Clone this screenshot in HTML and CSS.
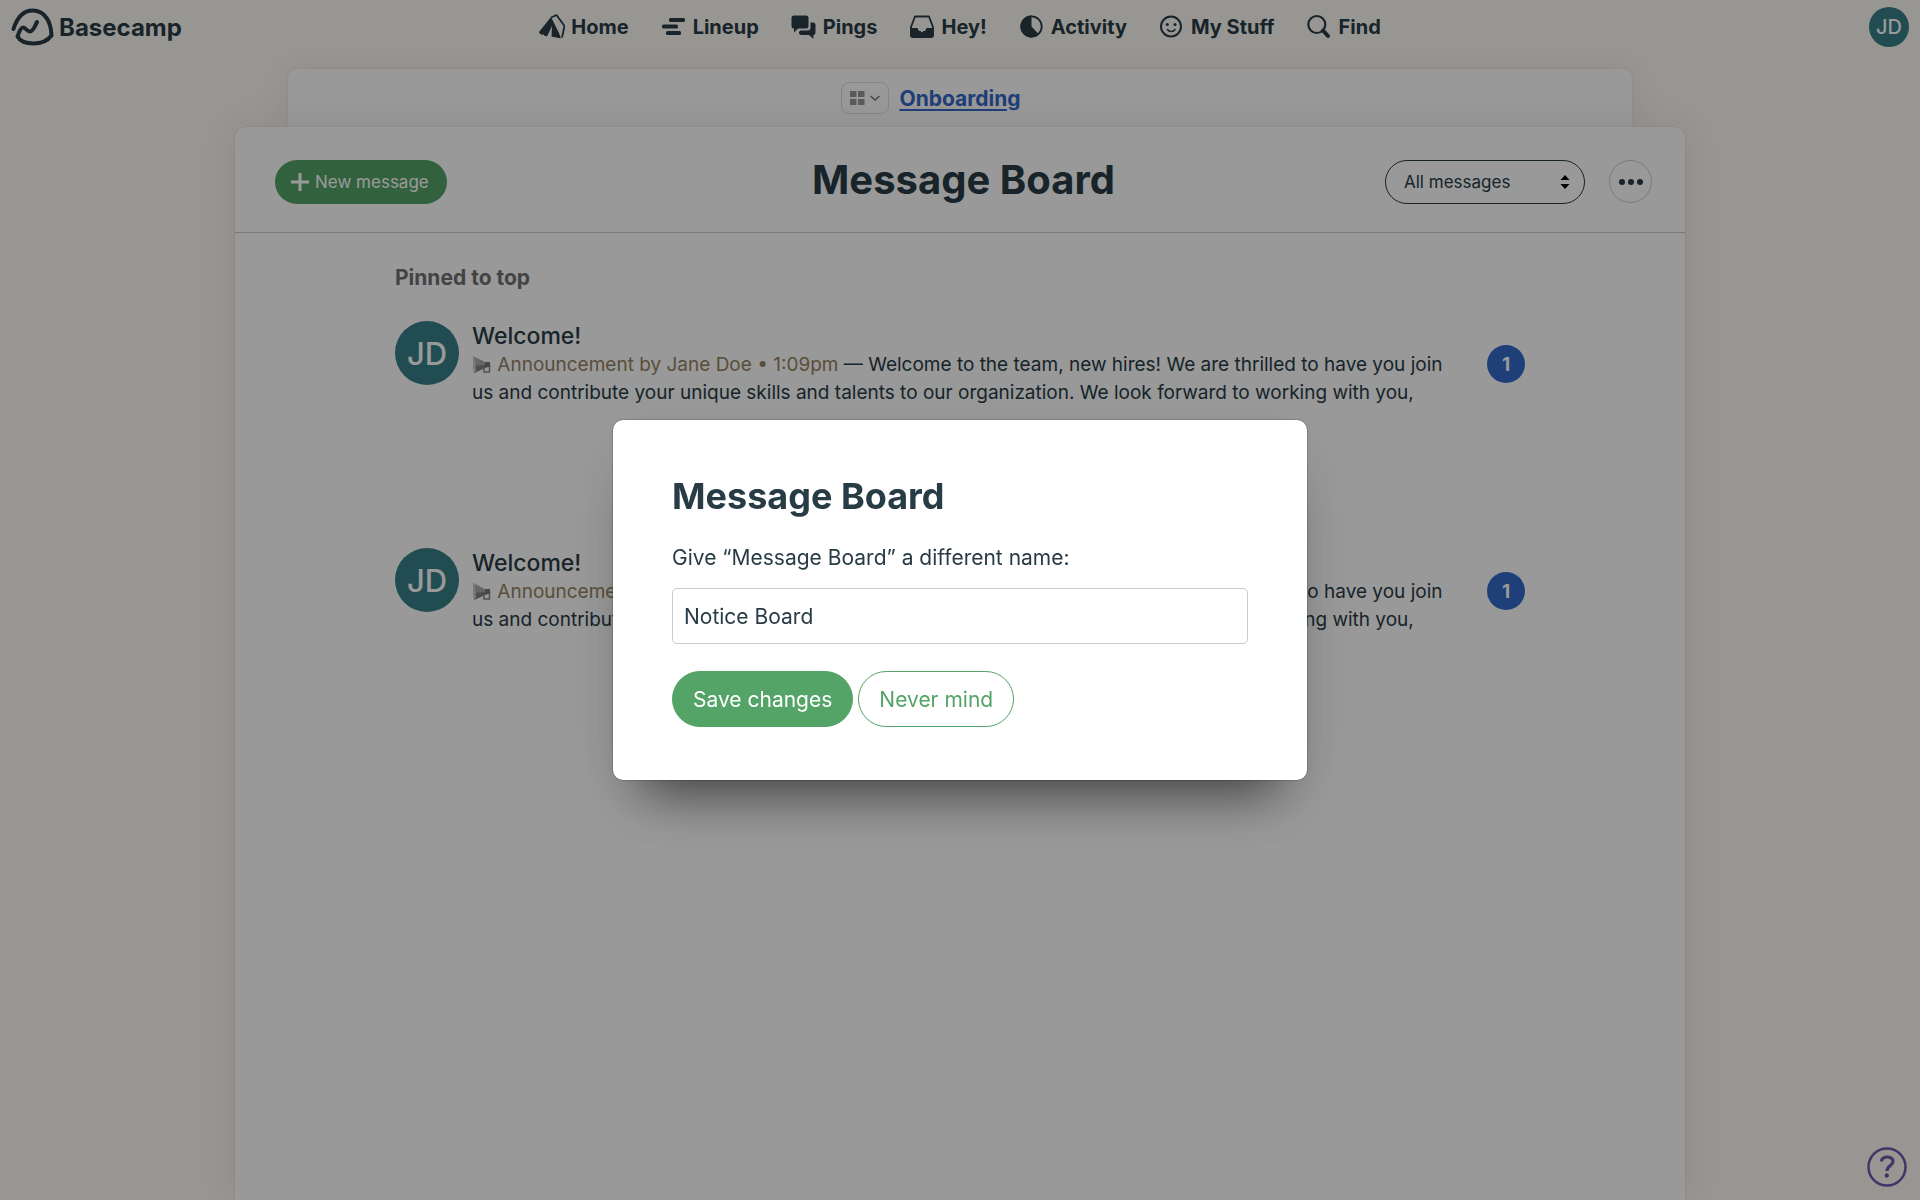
FILE: index.html
```html
<!DOCTYPE html>
<html lang="en">
<head>
  <meta charset="UTF-8">
  <meta name="viewport" content="width=device-width, initial-scale=1.0">
  <title>Message Board</title>
  <link rel="stylesheet" href="styles.css">
</head>
<body>
  <!-- Top navigation -->
  <header class="nav">
    <a class="logo" href="#">
      <svg width="44" height="40" viewBox="0 0 44 40" fill="none" stroke="currentColor" stroke-width="4" stroke-linecap="round" stroke-linejoin="round"><path d="M2.500 22C6 11 12 3.500 21.500 3.500C35 3.500 40 16 40.500 28.500C36 34.500 29 36.500 22.500 36.500C15 36.500 9 34 6.500 29.500C8 25 10 20.500 12 20.500C14.500 20.500 16 24.500 19 24.500C22 24.500 24 19 26 15"/></svg>
      <span>Basecamp</span>
    </a>
    <nav class="nav-links">
      <a href="#">
        <svg class="icon" viewBox="0 0 26 26"><path fill="currentColor" d="M12 3L0 18l1 2 3 1 1-1 0 1.500 3 1L13 12l-.500 10.500 9.500 2L20 19z"/><path fill="none" stroke="currentColor" stroke-width="1.800" stroke-linejoin="round" d="M12 3.500L17.500 1 25.500 12l-2.500 11.500"/></svg>
        Home
      </a>
      <a href="#">
        <svg class="icon" viewBox="0 0 26 26" fill="currentColor"><rect x="8" y="4" width="16" height="4" rx="1.500"/><rect x="1" y="10.500" width="16" height="4" rx="1.500"/><rect x="5" y="17" width="15" height="4" rx="1.500"/></svg>
        Lineup
      </a>
      <a href="#">
        <svg class="icon" viewBox="0 0 26 26" fill="currentColor"><path d="M3 1.500h12a2.500 2.500 0 0 1 2.500 2.500v8a2.500 2.500 0 0 1-2.500 2.500H7L3 18.500v-4A2.500 2.500 0 0 1 .500 12V4A2.500 2.500 0 0 1 3 1.500z"/><path d="M19.500 8.500h2.500a2.500 2.500 0 0 1 2.500 2.500v7.500a2.500 2.500 0 0 1-2 2.500v4l-4.500-4h-7.500a2.500 2.500 0 0 1-2.500-2.500v-.500l1.500-1.500h7a3 3 0 0 0 3-3z"/></svg>
        Pings
      </a>
      <a href="#">
        <svg class="icon" viewBox="0 0 26 26"><path fill="none" stroke="currentColor" stroke-width="1.800" stroke-linejoin="round" d="M6 2.500h14L24 13v8.500a1.500 1.500 0 0 1-1.500 1.500h-19A1.500 1.500 0 0 1 2 21.500V13z"/><path fill="currentColor" d="M1.500 14h7l1.500 3h1.500l1.500 1.500 1.500-1.500h1.500l1.500-3h7v7.500a2 2 0 0 1-2 2h-19a2 2 0 0 1-2-2z"/></svg>
        Hey!
      </a>
      <a href="#">
        <svg class="icon" viewBox="0 0 26 26"><circle cx="12.500" cy="12.500" r="10.200" fill="none" stroke="currentColor" stroke-width="1.800"/><path fill="currentColor" d="M12.500 1.500V12.500L20 20.500A11 11 0 1 1 12.500 1.500z"/></svg>
        Activity
      </a>
      <a href="#">
        <svg class="icon" viewBox="0 0 26 26" fill="none" stroke="currentColor" stroke-width="2"><circle cx="12" cy="12.500" r="10"/><path d="M8.500 15.500c1.500 2.500 6 2.500 7.500 0" stroke-width="1.500" stroke-linecap="round"/><circle cx="8.300" cy="10.500" r="1.500" fill="currentColor" stroke="none"/><circle cx="16" cy="10.500" r="1.500" fill="currentColor" stroke="none"/></svg>
        My Stuff
      </a>
      <a href="#">
        <svg class="icon" viewBox="0 0 26 26" fill="none" stroke="currentColor" stroke-linecap="round"><circle cx="9.800" cy="10.500" r="8.500" stroke-width="2.200"/><path d="M16 16.500L21 22" stroke-width="4"/></svg>
        Find
      </a>
    </nav>
    <a class="avatar avatar-small" href="#">JD</a>
  </header>

  <!-- Project breadcrumb -->
  <div class="crumb">
    <button class="crumb-menu" type="button" aria-label="Tools">
      <svg width="32" height="16" viewBox="0 0 32 16"><path fill="#999" d="M1 1h6.500v6H1zM9 1h6.500v6H9zM1 9h6.500v6H1zM9 9h6.500v6H9z"/><path fill="none" stroke="#777" stroke-width="1.500" d="M21.500 6l4.500 4 4.500-4"/></svg>
    </button>
    <a href="#">Onboarding</a>
  </div>

  <main class="panel">
    <div class="panel-header">
      <div>
        <button class="new-message" type="button">
          <svg width="20" height="20" viewBox="0 0 20 20" stroke="currentColor" stroke-width="3"><path d="M10 1v18M1 10h18"/></svg>
          New message
        </button>
      </div>
      <h1>Message Board</h1>
      <div class="panel-actions">
        <div class="filter">
          <select aria-label="Filter messages">
            <option>All messages</option>
          </select>
          <svg width="10" height="16" viewBox="0 0 10 16"><path d="M5 1l4.500 5H.500zM5 15l4.500-5H.500z"/></svg>
        </div>
        <button class="more" type="button" aria-label="More options">
          <svg width="24" height="8" viewBox="0 0 24 8" fill="currentColor"><circle cx="3" cy="4" r="3"/><circle cx="12" cy="4" r="3"/><circle cx="21" cy="4" r="3"/></svg>
        </button>
      </div>
    </div>

    <div class="messages">
      <h2>Pinned to top</h2>

      <article class="message">
        <span class="avatar">JD</span>
        <div class="message-text">
          <h3>Welcome!</h3>
          <p>
            <svg class="megaphone" viewBox="0 0 20 20"><path fill="none" stroke="#888" stroke-width="1.500" d="M12 13v4h5.500V9"/><path fill="#aaa" d="M1 1L13 7v6L2 18z"/><path fill="#808080" d="M1.500 11L13 10v3L2 18z"/><path fill="#ccc" d="M1 1l2 1.500 1 13L2 18z"/><path fill="#777" d="M13 7h5v4.500l-5 1.500z"/></svg>
            <span class="meta">Announcement by Jane Doe • 1:09pm</span> — Welcome to the team, new hires! We are thrilled to have you join us and contribute your unique skills and talents to our organization. We look forward to working with you,
          </p>
        </div>
        <span class="count">1</span>
      </article>

      <article class="message">
        <span class="avatar">JD</span>
        <div class="message-text">
          <h3>Welcome!</h3>
          <p>
            <svg class="megaphone" viewBox="0 0 20 20"><path fill="none" stroke="#888" stroke-width="1.500" d="M12 13v4h5.500V9"/><path fill="#aaa" d="M1 1L13 7v6L2 18z"/><path fill="#808080" d="M1.500 11L13 10v3L2 18z"/><path fill="#ccc" d="M1 1l2 1.500 1 13L2 18z"/><path fill="#777" d="M13 7h5v4.500l-5 1.500z"/></svg>
            <span class="meta">Announcement by Jane Doe • 1:09pm</span> — Welcome to the team, new hires! We are thrilled to have you join us and contribute your unique skills and talents to our organization. We look forward to working with you,
          </p>
        </div>
        <span class="count">1</span>
      </article>
    </div>
  </main>

  <button class="help" type="button" aria-label="Help">
    <svg width="40" height="40" viewBox="0 0 40 40" fill="none" stroke="currentColor"><circle cx="20" cy="20" r="18.500" stroke-width="2.500"/><path d="M14.500 14.500c0-6 11.500-6 11.500 0 0 4-6 4-6 9.500" stroke-width="3.200"/><circle cx="19.800" cy="28.500" r="2.200" fill="currentColor" stroke="none"/></svg>
  </button>

  <!-- Rename dialog -->
  <div class="overlay">
    <form class="modal" role="dialog" aria-labelledby="modal-title">
      <h2 id="modal-title">Message Board</h2>
      <label for="tool-name">Give “Message Board” a different name:</label>
      <input type="text" id="tool-name" value="Notice Board">
      <div class="modal-buttons">
        <button class="primary" type="submit">Save changes</button>
        <button class="secondary" type="button">Never mind</button>
      </div>
    </form>
  </div>
</body>
</html>
```
FILE: styles.css
```css
* {
  box-sizing: border-box;
}

body {
  display: flex;
  flex-direction: column;
  align-items: center;
  min-height: 100vh;
  margin: 0;
  background-color: #fefaf6;
  color: #283c46;
  font-family: Inter, "Liberation Sans", sans-serif;
  font-size: 19px;
}

h1, h2, h3, p {
  margin: 0;
}

button, input, select {
  font-family: inherit;
  color: inherit;
}

button {
  cursor: pointer;
}

/* Navigation */
.nav {
  display: grid;
  grid-template-columns: 1fr auto 1fr;
  align-items: center;
  width: 100%;
  height: 54px;
  padding: 0 11px;
}

.nav a {
  color: inherit;
  text-decoration: none;
}

.logo {
  display: flex;
  align-items: center;
  gap: 4px;
  font-size: 24px;
  font-weight: 700;
}

.nav-links {
  display: flex;
  gap: 32px;
  font-size: 20px;
  font-weight: 700;
}

.nav-links a {
  display: flex;
  align-items: center;
  gap: 6px;
}

.icon {
  width: 26px;
  height: 26px;
}

.avatar {
  display: flex;
  flex-shrink: 0;
  align-items: center;
  justify-content: center;
  align-self: flex-start;
  width: 64px;
  height: 64px;
  border-radius: 50%;
  background-color: #388089;
  color: #fff;
  font-size: 31px;
  font-weight: 500;
}

.nav .avatar-small {
  align-self: center;
  justify-self: end;
  width: 40px;
  height: 40px;
  color: #fff;
  font-size: 20px;
}

/* Stacked sheets */
.crumb {
  display: flex;
  align-items: center;
  justify-content: center;
  gap: 10px;
  width: 100%;
  max-width: 1344px;
  height: 58px;
  margin-top: 15px;
  padding-right: 58px;
  border-radius: 8px 8px 0 0;
  background-color: #fff;
  box-shadow: 0 0 2px rgba(0, 0, 0, 0.1), 0 0 30px rgba(90, 70, 40, 0.1);
}

.crumb a {
  color: #3469c9;
  font-size: 21px;
  font-weight: 700;
  text-underline-offset: 3px;
}

.crumb-menu {
  display: flex;
  align-items: center;
  justify-content: center;
  width: 48px;
  height: 32px;
  padding: 0;
  border: 1px solid #ddd;
  border-radius: 8px;
  background: none;
}

.panel {
  flex: 1;
  width: 100%;
  max-width: 1450px;
  border-radius: 10px 10px 0 0;
  background-color: #fff;
  box-shadow: 0 0 2px rgba(0, 0, 0, 0.12), 0 0 40px rgba(90, 70, 40, 0.12);
}

.panel-header {
  display: grid;
  grid-template-columns: 1fr auto 1fr;
  align-items: center;
  height: 106px;
  padding: 4px 33px 0 40px;
  border-bottom: 1px solid #ccc;
}

.panel-header h1 {
  margin-bottom: 4px;
  font-size: 40px;
  font-weight: 700;
}

.new-message {
  display: flex;
  align-items: center;
  gap: 5px;
  height: 44px;
  padding: 0 18px 0 15px;
  border: none;
  border-radius: 22px;
  background-color: #54a367;
  color: #fff;
  font-size: 17px;
}

.panel-actions {
  display: flex;
  align-items: center;
  justify-content: flex-end;
  gap: 24px;
}

.filter {
  position: relative;
}

.filter select {
  width: 200px;
  height: 44px;
  padding: 0 18px;
  appearance: none;
  border: 1px solid #283c46;
  border-radius: 22px;
  background: none;
  font-size: 17px;
}

.filter svg {
  position: absolute;
  top: 14px;
  right: 15px;
  pointer-events: none;
}

.more {
  display: flex;
  align-items: center;
  justify-content: center;
  width: 43px;
  height: 43px;
  padding: 0;
  border: 1px solid #ccc;
  border-radius: 50%;
  background: none;
}

/* Messages */
.messages {
  display: flex;
  flex-direction: column;
  gap: 141px;
  padding: 30px 160px;
}

.messages h2 {
  margin-bottom: -113px;
  color: #707070;
  font-size: 21px;
  font-weight: 700;
  line-height: 30px;
}

.message {
  display: flex;
  align-items: center;
}

.message-text {
  flex: 1;
  margin: 0 28px 0 13px;
}

.message-text h3 {
  font-size: 23px;
  font-weight: 500;
  line-height: 30px;
}

.message-text p {
  line-height: 28px;
}

.meta {
  color: #948261;
}

.megaphone {
  width: 20px;
  height: 20px;
  vertical-align: -4px;
}

.count {
  display: flex;
  flex-shrink: 0;
  align-items: center;
  justify-content: center;
  width: 38px;
  height: 38px;
  border-radius: 50%;
  background-color: #3469c9;
  color: #fff;
  font-size: 19px;
  font-weight: 700;
}

.help {
  position: fixed;
  right: 13px;
  bottom: 13px;
  display: flex;
  padding: 0;
  border: none;
  background: none;
  color: #6b5bab;
}

/* Modal */
.overlay {
  position: fixed;
  inset: 0;
  display: flex;
  align-items: center;
  justify-content: center;
  background-color: rgba(0, 0, 0, 0.4);
}

.modal {
  display: flex;
  flex-direction: column;
  width: 694px;
  padding: 52px 59px 53px;
  border-radius: 10px;
  background-color: #fff;
  box-shadow: 0 0 2px rgba(0, 0, 0, 0.5), 0 40px 50px -30px rgba(0, 0, 0, 0.6), 0 20px 80px rgba(0, 0, 0, 0.08);
}

.modal h2 {
  margin-bottom: 22px;
  font-size: 36px;
  font-weight: 700;
  line-height: 48px;
}

.modal label {
  margin-bottom: 14px;
  font-size: 21px;
  line-height: 32px;
}

.modal input {
  height: 56px;
  margin-bottom: 27px;
  padding: 0 11px;
  border: 1px solid #ccc;
  border-radius: 5px;
  font-size: 21px;
}

.modal-buttons {
  display: flex;
  gap: 5px;
}

.modal-buttons button {
  height: 56px;
  padding: 0 20px;
  border: 1px solid #54a367;
  border-radius: 28px;
  background-color: #fff;
  color: #54a367;
  font-size: 21px;
}

.modal-buttons .primary {
  background-color: #54a367;
  color: #fff;
}
```
